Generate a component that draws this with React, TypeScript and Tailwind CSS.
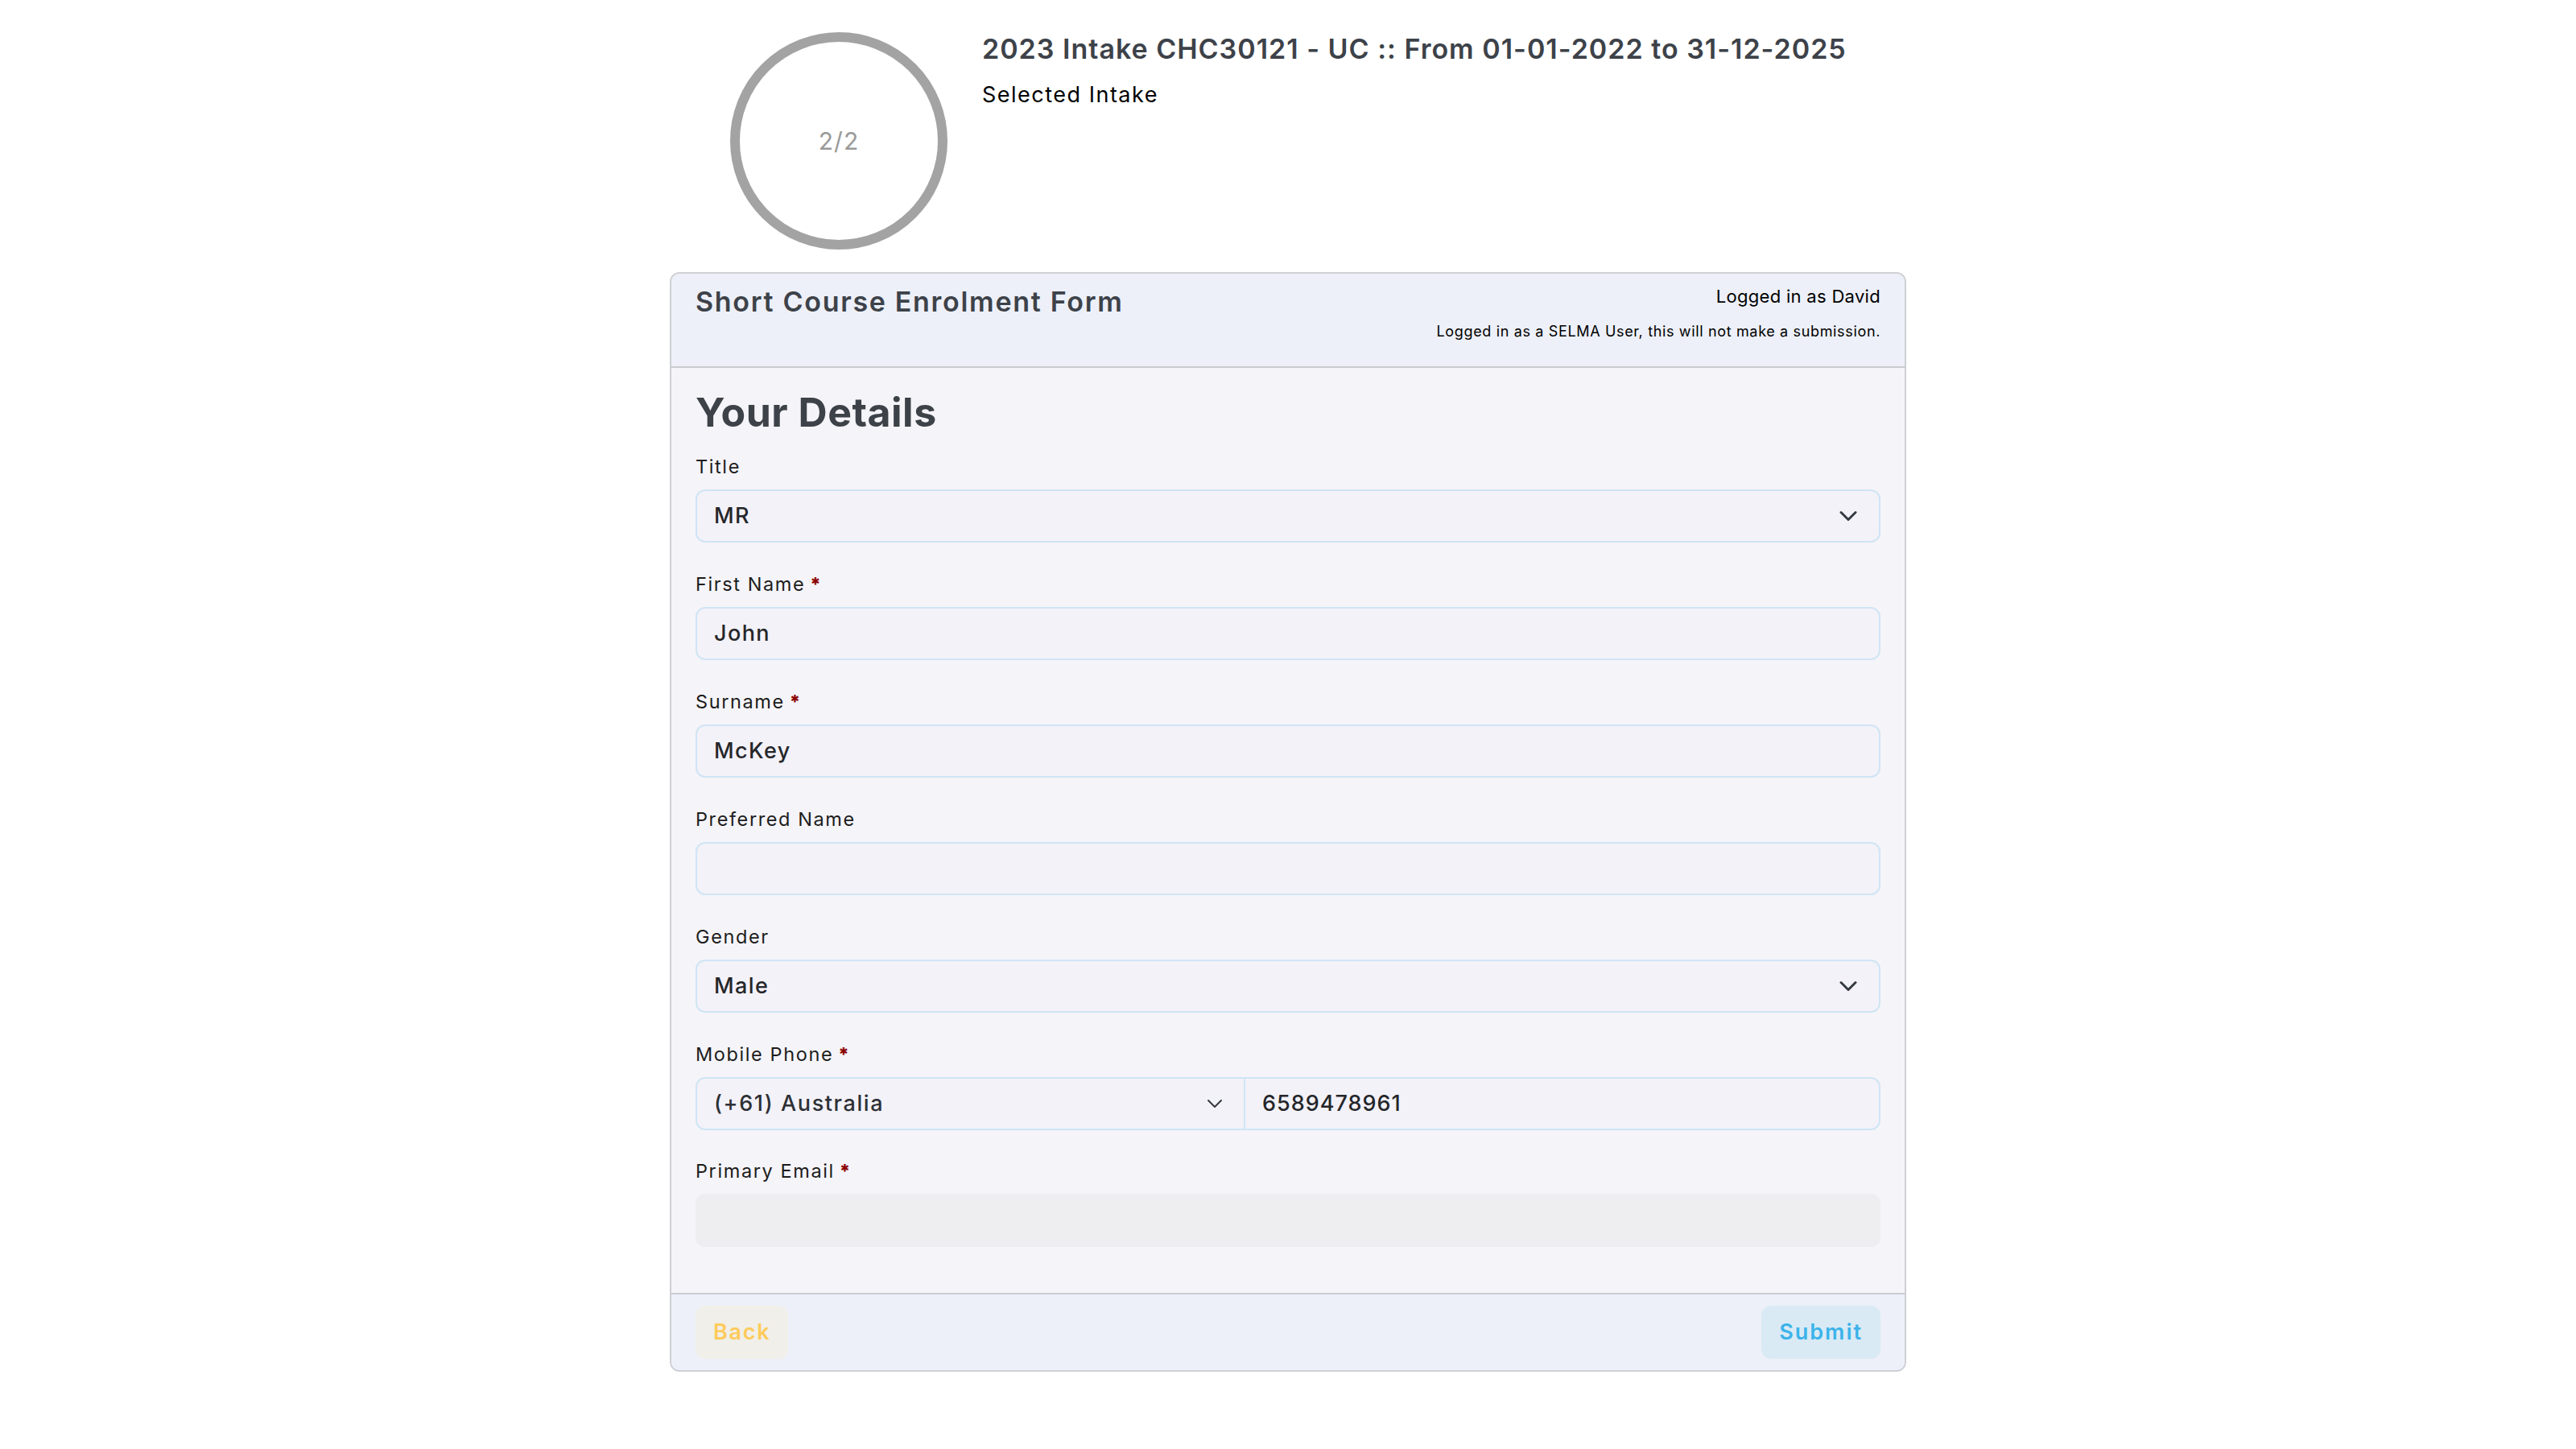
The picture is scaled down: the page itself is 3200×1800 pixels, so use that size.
import React from "react";

function Chevron() {
  return (
    <svg width="24" height="24" viewBox="0 0 16 16" fill="none" className="shrink-0">
      <path d="m2 5 6 6 6-6" stroke="#343a40" strokeWidth="2" strokeLinecap="round" strokeLinejoin="round" />
    </svg>
  );
}

function SmallChevron() {
  return (
    <svg width="20" height="12" viewBox="0 0 20 12" fill="none" className="shrink-0">
      <polyline points="2 2 10 10 18 2" stroke="#343a40" strokeWidth="2" strokeLinecap="round" strokeLinejoin="round" />
    </svg>
  );
}

function Label({ text, required }: { text: string; required?: boolean }) {
  return (
    <div className="mb-[10px] h-[36px] text-[23.5px] leading-[36px] tracking-[1.6px] text-[#1c1c1c]">
      {text}
      {required && <span className="ml-[6px] text-[23px] font-extrabold text-[#8b0000]">*</span>}
    </div>
  );
}

function Field({ label, value, required, select }: { label: string; value?: string; required?: boolean; select?: boolean }) {
  return (
    <div className="mb-[34px]">
      <Label text={label} required={required} />
      <div className="flex h-[66px] items-center justify-between rounded-[12px] border-2 border-[#cfe5f5] bg-[#f3f2f8] pl-[21px] pr-[26px]">
        <span className="text-[27px] font-medium tracking-[1.4px] text-[#25262a]">{value}</span>
        {select && <Chevron />}
      </div>
    </div>
  );
}

export default function App() {
  return (
    <div className="min-h-screen bg-white font-['Inter',sans-serif]">
      <div className="mx-auto w-[1536px] pt-[40px]">
        <div className="flex pl-[75px]">
          <div className="flex h-[270px] w-[270px] shrink-0 items-center justify-center rounded-full border-[12px] border-[#a3a3a3]">
            <span className="text-[30px] tracking-[1px] text-[#9a9a9a]">2/2</span>
          </div>
          <div className="ml-[43px] -mt-[1px]">
            <h1 className="text-[34px] leading-[44px] font-semibold tracking-[1px] text-[#3d4249]">
              2023 Intake CHC30121 - UC :: From 01-01-2022 to 31-12-2025
            </h1>
            <p className="mt-[17px] text-[27px] leading-[36px] tracking-[1.5px] text-black">Selected Intake</p>
          </div>
        </div>

        <div className="mt-[28px] overflow-hidden rounded-[12px] border-2 border-[#cfd0d5] bg-[#f5f4f8]">
          <div className="flex h-[117px] items-start justify-between border-b-2 border-[#c9cbd0] bg-[#edf0f8] px-[30px] pt-[13px]">
            <h2 className="text-[34px] leading-[44px] font-semibold tracking-[1.7px] text-[#3d4249]">Short Course Enrolment Form</h2>
            <div className="flex flex-col items-end text-right text-black">
              <span className="text-[22px] leading-[30px] tracking-[0.3px]">Logged in as David</span>
              <span className="mt-[16px] text-[18px] leading-[26px] tracking-[0.65px]">Logged in as a SELMA User, this will not make a submission.</span>
            </div>
          </div>

          <div className="px-[30px] pt-[25px] pb-[57px]">
            <h3 className="mb-[20px] text-[50px] leading-[60px] font-bold tracking-[0.5px] text-[#3d4249]">Your Details</h3>
            <Field label="Title" value="MR" select />
            <Field label="First Name" value="John" required />
            <Field label="Surname" value="McKey" required />
            <Field label="Preferred Name" value="" />
            <Field label="Gender" value="Male" select />
            <div className="mb-[33px]">
              <Label text="Mobile Phone" required />
              <div className="flex h-[66px] rounded-[12px] border-2 border-[#cfe5f5] bg-[#f3f2f8]">
                <div className="flex w-[681px] items-center justify-between border-r-2 border-[#cfe5f5] pl-[21px] pr-[26px]">
                  <span className="text-[27px] font-medium tracking-[1.6px] text-[#2d3035]">(+61) Australia</span>
                  <SmallChevron />
                </div>
                <div className="flex flex-1 items-center pl-[21px]">
                  <span className="text-[27px] font-medium tracking-[1px] text-[#25262a]">6589478961</span>
                </div>
              </div>
            </div>
            <div>
              <Label text="Primary Email" required />
              <div className="h-[66px] rounded-[12px] bg-[#eeeef1]" />
            </div>
          </div>

          <div className="flex items-center justify-between border-t-2 border-[#c9cbd0] bg-[#edf0f8] px-[30px] py-[14px]">
            <button className="flex h-[66px] items-center rounded-[12px] bg-[#f0efe9] px-[22px] text-[27px] font-semibold tracking-[1.7px] text-[#fdcb5c]">
              Back
            </button>
            <button className="flex h-[66px] items-center rounded-[12px] bg-[#d9eaf5] px-[22px] text-[27px] font-semibold tracking-[2px] text-[#3cb3ea]">
              Submit
            </button>
          </div>
        </div>
      </div>
    </div>
  );
}
